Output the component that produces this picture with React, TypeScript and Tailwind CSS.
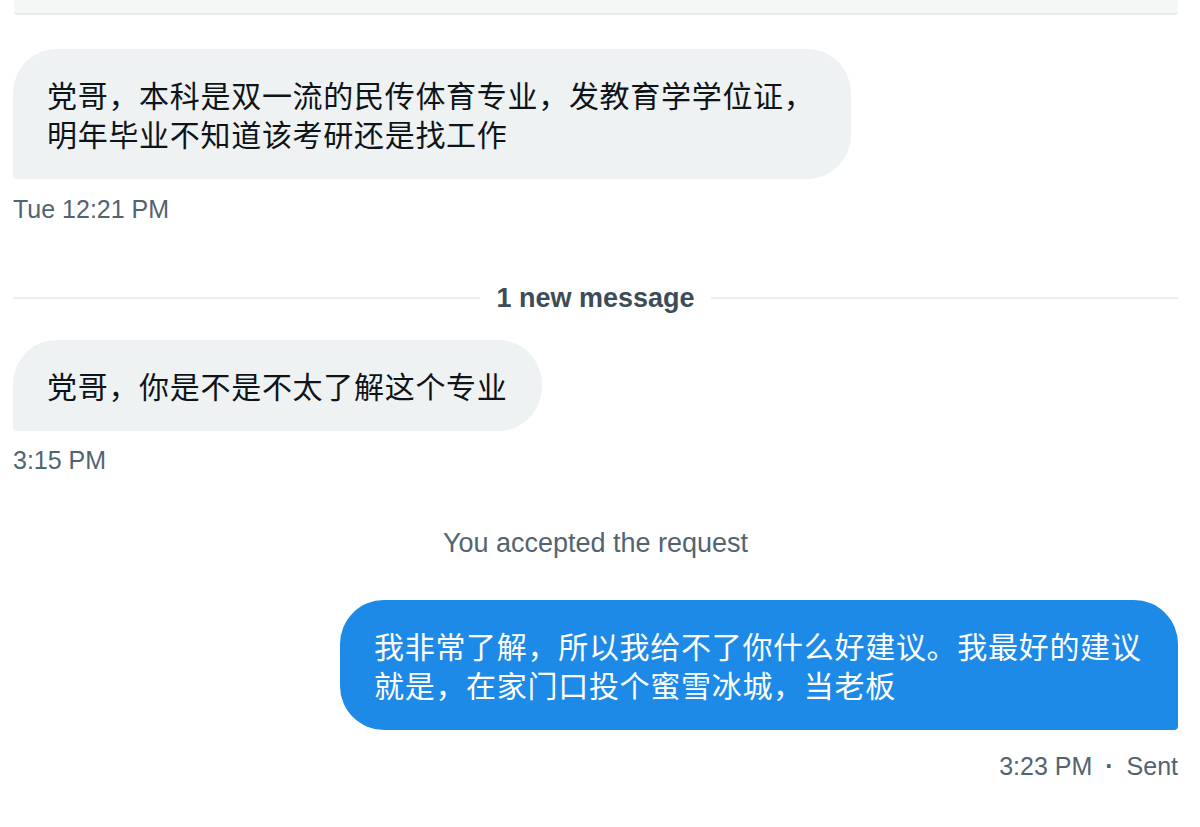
const cjk = { fontFamily: '"Noto Sans CJK SC", "Liberation Sans", sans-serif' };
const latin = { fontFamily: '"Liberation Sans", "Noto Sans CJK SC", sans-serif' };

function Bubble({ text, mine }: { text: string; mine?: boolean }) {
  return (
    <div
      style={cjk}
      className={
        mine
          ? "self-end max-w-[838px] rounded-[44px] rounded-br-[4px] bg-[#1e8ae8] px-[34px] py-[26px] text-[30px] leading-[39px] tracking-[0.7px] text-white"
          : "self-start max-w-[838px] rounded-[44px] rounded-bl-[4px] bg-[#eef2f3] px-[34px] py-[26px] text-[30px] leading-[39px] tracking-[0.7px] text-[#0f1419]"
      }
    >
      {text}
    </div>
  );
}

export default function App() {
  return (
    <div style={latin} className="h-[827px] w-[1200px] overflow-hidden bg-white">
      <div className="ml-[14px] mr-[22px] h-[15px] rounded-b-[3px] border-b-2 border-[#e7ebec] bg-[#f5f7f7]" />

      <div className="flex flex-col pl-[13px] pr-[22px]">
        <div className="mt-[34px] flex flex-col">
          <Bubble text="党哥，本科是双一流的民传体育专业，发教育学学位证，明年毕业不知道该考研还是找工作" />
        </div>
        <div className="mt-[15px] text-[25px] leading-[30px] text-[#536471]">Tue 12:21 PM</div>

        <div className="mt-[54px] flex h-[40px] items-center gap-[16px]">
          <div className="h-[2px] flex-1 bg-[#eaeff1]" />
          <div className="text-[27px] font-bold leading-[40px] text-[#3e4c58]">1 new message</div>
          <div className="h-[2px] flex-1 bg-[#eaeff1]" />
        </div>

        <div className="mt-[22px] flex flex-col">
          <Bubble text="党哥，你是不是不太了解这个专业" />
        </div>
        <div className="mt-[14px] text-[25px] leading-[30px] text-[#536471]">3:15 PM</div>

        <div className="mt-[51px] text-center text-[27px] leading-[34px] text-[#536471]">
          You accepted the request
        </div>

        <div className="mt-[40px] flex flex-col">
          <Bubble mine text="我非常了解，所以我给不了你什么好建议。我最好的建议就是，在家门口投个蜜雪冰城，当老板" />
        </div>
        <div className="mt-[21px] text-right text-[25px] leading-[30px] text-[#536471]">
          3:23 PM<span className="px-[13px] font-bold">·</span>Sent
        </div>
      </div>
    </div>
  );
}
